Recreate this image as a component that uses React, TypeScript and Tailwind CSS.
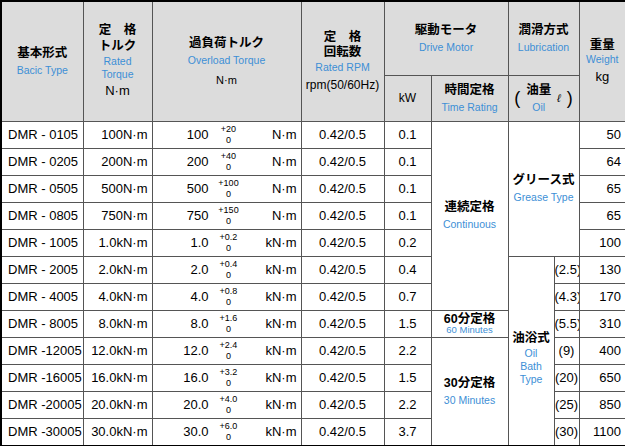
const rows = [
  ['0105', '100N·m', '100', '+20', 'N·m', '0.1', '50'],
  ['0205', '200N·m', '200', '+40', 'N·m', '0.1', '64'],
  ['0505', '500N·m', '500', '+100', 'N·m', '0.1', '65'],
  ['0805', '750N·m', '750', '+150', 'N·m', '0.1', '65'],
  ['1005', '1.0kN·m', '1.0', '+0.2', 'kN·m', '0.2', '100'],
  ['2005', '2.0kN·m', '2.0', '+0.4', 'kN·m', '0.4', '130'],
  ['4005', '4.0kN·m', '4.0', '+0.8', 'kN·m', '0.7', '170'],
  ['8005', '8.0kN·m', '8.0', '+1.6', 'kN·m', '1.5', '310'],
  ['-12005', '12.0kN·m', '12.0', '+2.4', 'kN·m', '2.2', '400'],
  ['-16005', '16.0kN·m', '16.0', '+3.2', 'kN·m', '1.5', '650'],
  ['-20005', '20.0kN·m', '20.0', '+4.0', 'kN·m', '2.2', '850'],
  ['-30005', '30.0kN·m', '30.0', '+6.0', 'kN·m', '3.7', '1100'],
];
const oil: Record<number, string> = { 5: '(2.5)', 6: '(4.3)', 7: '(5.5)', 8: '(9)', 9: '(20)', 10: '(25)', 11: '(30)' };

const jp = 'font-bold text-[12.5px] text-black';
const en = 'text-[10.5px] text-[#3d8fd6]';
const td = 'border border-[#555] h-[27px] p-0 text-[13px] whitespace-nowrap overflow-hidden';

export default function App() {
  return (
    <div className="w-[625px] h-[446px] bg-white overflow-hidden" style={{ fontFamily: '"Liberation Sans", "Noto Sans CJK JP", sans-serif' }}>
      <table className="table-fixed border-collapse border-2 border-black w-[625px] text-black">
        <colgroup>
          {[82, 69, 149, 83, 47, 77, 46, 25, 47].map((w, i) => <col key={i} style={{ width: w }} />)}
        </colgroup>
        <thead className="bg-[#dcdcdc]">
          <tr className="h-[74px]">
            <th rowSpan={2} className="border border-[#555] font-normal">
              <div className={jp}>基本形式</div><div className={en}>Bacic Type</div>
            </th>
            <th rowSpan={2} className="border border-[#555] font-normal leading-tight">
              <div className={jp}>定　格</div><div className={jp}>トルク</div>
              <div className={en}>Rated</div><div className={en}>Torque</div>
              <div className="text-[13px] mt-0.5">N·m</div>
            </th>
            <th rowSpan={2} className="border border-[#555] font-normal">
              <div className={jp}>過負荷トルク</div><div className={en}>Overload Torque</div>
              <div className="text-[11px] mt-1">N·m</div>
            </th>
            <th rowSpan={2} className="border border-[#555] font-normal leading-tight">
              <div className={jp}>定　格</div><div className={jp}>回転数</div>
              <div className={en}>Rated RPM</div><div className="text-[12px] mt-1 whitespace-nowrap">rpm(50/60Hz)</div>
            </th>
            <th colSpan={2} className="border border-[#555] font-normal">
              <div className={jp}>駆動モータ</div><div className={en}>Drive Motor</div>
            </th>
            <th colSpan={2} className="border border-[#555] font-normal">
              <div className={jp}>潤滑方式</div><div className={en}>Lubrication</div>
            </th>
            <th rowSpan={2} className="border border-[#555] font-normal leading-tight">
              <div className={jp}>重量</div><div className={en}>Weight</div><div className="text-[13px] mt-0.5">kg</div>
            </th>
          </tr>
          <tr className="h-[46px]">
            <th className="border border-[#555] font-normal text-[12px]">kW</th>
            <th className="border border-[#555] font-normal">
              <div className={jp}>時間定格</div><div className={en}>Time Rating</div>
            </th>
            <th colSpan={2} className="border border-[#555] font-normal">
              <div className="flex items-center justify-center gap-1.5">
                <span className="text-[18px]">(</span>
                <span className="flex flex-col"><span className={jp}>油量</span><span className={en}>Oil</span></span>
                <span className="text-[11px] italic">ℓ</span>
                <span className="text-[18px]">)</span>
              </div>
            </th>
          </tr>
        </thead>
        <tbody>
          {rows.map((r, i) => (
            <tr key={i} className="h-[27px]">
              <td className={`${td} pl-1.5`}>{r[0].startsWith('-') ? 'DMR -' + r[0].slice(1) : 'DMR -  ' + r[0]}</td>
              <td className={`${td} text-right pr-1`}>{r[1]}</td>
              <td className={td}>
                <div className="flex items-center h-[26px] pr-1">
                  <span className="w-[56px] text-right">{r[2]}</span>
                  <span className="flex flex-col items-center text-[9px] leading-[11px] ml-2 w-[24px]">
                    <span>{r[3]}</span><span>0</span>
                  </span>
                  <span className="ml-auto">{r[4]}</span>
                </div>
              </td>
              <td className={`${td} text-center`}>{'0.42/0.5'}</td>
              <td className={`${td} text-center`}>{r[5]}</td>
              {i === 0 && (
                <td rowSpan={7} className={`${td} text-center`}>
                  <div className={jp}>連続定格</div><div className={en}>Continuous</div>
                </td>
              )}
              {i === 7 && (
                <td className={`${td} text-center leading-none`}>
                  <div className={jp}>60分定格</div><div className="text-[9.5px] text-[#3d8fd6]">60 Minutes</div>
                </td>
              )}
              {i === 8 && (
                <td rowSpan={4} className={`${td} text-center`}>
                  <div className={jp}>30分定格</div><div className={en}>30 Minutes</div>
                </td>
              )}
              {i === 0 && (
                <td rowSpan={5} colSpan={2} className={`${td} text-center`}>
                  <div className={jp}>グリース式</div><div className={en}>Grease Type</div>
                </td>
              )}
              {i === 5 && (
                <td rowSpan={7} className={`${td} text-center leading-tight`}>
                  <div className={`${jp} mt-4`}>油浴式</div>
                  <div className={en}>Oil</div><div className={en}>Bath</div><div className={en}>Type</div>
                </td>
              )}
              {i >= 5 && <td className={`${td} text-center text-[8.5px]`}>{oil[i]}</td>}
              <td className={`${td} text-right pr-1`}>{r[6]}</td>
            </tr>
          ))}
        </tbody>
      </table>
    </div>
  );
}
